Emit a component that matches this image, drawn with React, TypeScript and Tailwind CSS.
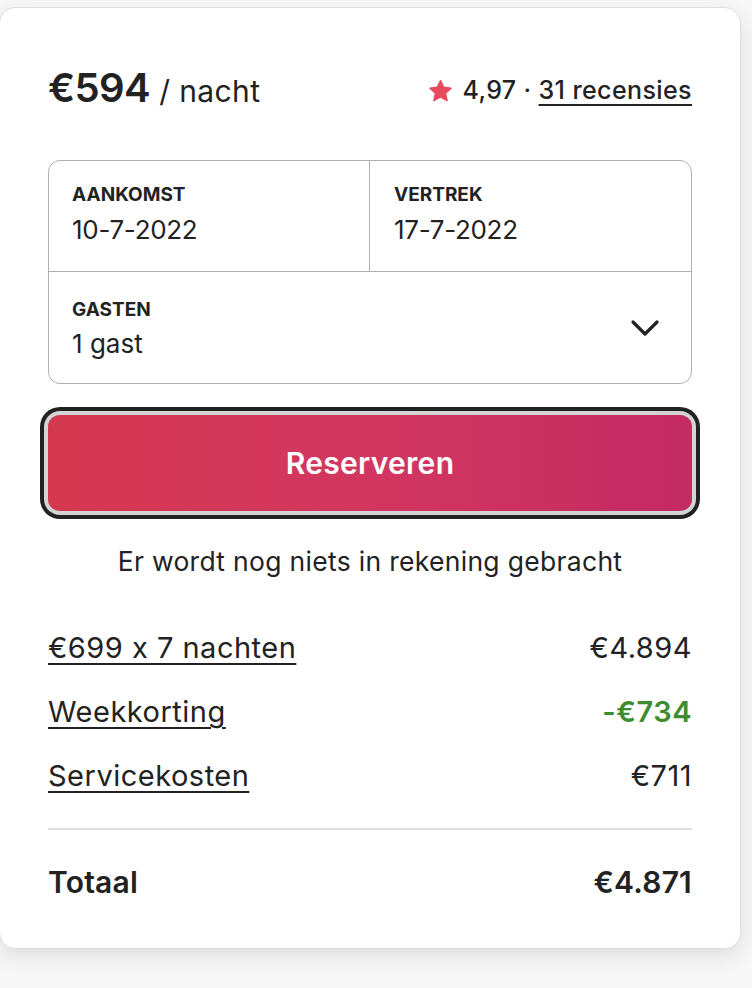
const font = { fontFamily: 'Inter, "Noto Sans", sans-serif' }

function Star() {
  return (
    <svg viewBox="0 0 32 32" className="h-[23px] w-[23px] fill-[#e84a5f]">
      <path d="M15.1 1.58l-4.13 8.88-9.86 1.27a1 1 0 0 0-.54 1.74l7.3 6.57-1.97 9.85a1 1 0 0 0 1.48 1.06l8.62-5 8.63 5a1 1 0 0 0 1.48-1.06l-1.97-9.85 7.3-6.57a1 1 0 0 0-.55-1.73l-9.86-1.28-4.12-8.88a1 1 0 0 0-1.82 0z" />
    </svg>
  )
}

function Chevron() {
  return (
    <svg viewBox="0 0 32 32" className="h-[32px] w-[32px]" fill="none" stroke="#222222" strokeWidth={3.2} strokeLinecap="round" strokeLinejoin="round">
      <path d="M4 10 16 22 28 10" />
    </svg>
  )
}

function LineItem({ label, value, green }: { label: string; value: string; green?: boolean }) {
  return (
    <div className="flex h-[64px] items-center justify-between text-[29px] tracking-[0.5px]">
      <span className="underline decoration-[1.5px] underline-offset-[5px]">{label}</span>
      <span className={green ? 'font-semibold text-[#3d8c2f]' : ''}>{value}</span>
    </div>
  )
}

export default function App() {
  return (
    <div className="min-h-screen bg-[#f7f7f7] pt-[7px] text-[#222222]" style={font}>
      <div className="ml-[-1px] w-[742px] rounded-[16px] border border-[#dddddd] bg-white px-[48px] pt-[56px] pb-[34px] shadow-[0_8px_22px_rgba(0,0,0,0.10)]">
        <div className="flex h-[48px] items-center justify-between">
          <div className="flex items-baseline">
            <span className="text-[40px] font-semibold tracking-[-0.6px]">€594</span>
            <span className="ml-[9px] text-[30px] tracking-[0.4px]">/ nacht</span>
          </div>
          <div className="mt-[5px] flex items-center text-[25px] font-medium tracking-[0.4px]">
            <Star />
            <span className="ml-[10px]">4,97</span>
            <span className="mx-[7px]">·</span>
            <span className="underline decoration-[2px] underline-offset-[5px]">31 recensies</span>
          </div>
        </div>

        <div className="mt-[48px] rounded-[12px] border border-[#b0b0b0]">
          <div className="grid h-[111px] grid-cols-2 border-b border-[#b0b0b0]">
            <div className="border-r border-[#b0b0b0] pl-[23px] pt-[22px]">
              <div className="text-[19px] font-bold leading-[24px]">AANKOMST</div>
              <div className="mt-[7px] text-[26px] leading-[32px] tracking-[-0.3px]">10-7-2022</div>
            </div>
            <div className="pl-[24px] pt-[22px]">
              <div className="text-[19px] font-bold leading-[24px]">VERTREK</div>
              <div className="mt-[7px] text-[26px] leading-[32px] tracking-[-0.3px]">17-7-2022</div>
            </div>
          </div>
          <div className="flex h-[111px] items-center justify-between pl-[23px] pr-[30px]">
            <div className="pt-[2px]">
              <div className="text-[19px] font-bold leading-[24px]">GASTEN</div>
              <div className="mt-[6px] text-[26px] leading-[32px]">1 gast</div>
            </div>
            <Chevron />
          </div>
        </div>

        <button className="mt-[31px] flex h-[96px] w-full items-center justify-center rounded-[12px] bg-gradient-to-r from-[#d5394f] via-[#d33660] to-[#c42a63] text-[30px] font-semibold tracking-[0.3px] text-white shadow-[0_0_0_4px_#d4d4d4,0_0_0_8px_#222222]">
          Reserveren
        </button>

        <p className="mt-[34px] text-center text-[26.5px] leading-[32px] tracking-[0.3px]">
          Er wordt nog niets in rekening gebracht
        </p>

        <div className="mt-[39px]">
          <LineItem label="€699 x 7 nachten" value="€4.894" />
          <LineItem label="Weekkorting" value="-€734" green />
          <LineItem label="Servicekosten" value="€711" />
        </div>

        <div className="mt-[20px] border-t-2 border-[#dddddd]" />

        <div className="mt-[20px] flex h-[64px] items-center justify-between text-[30px] font-semibold tracking-[0.2px]">
          <span>Totaal</span>
          <span>€4.871</span>
        </div>
      </div>
    </div>
  )
}
